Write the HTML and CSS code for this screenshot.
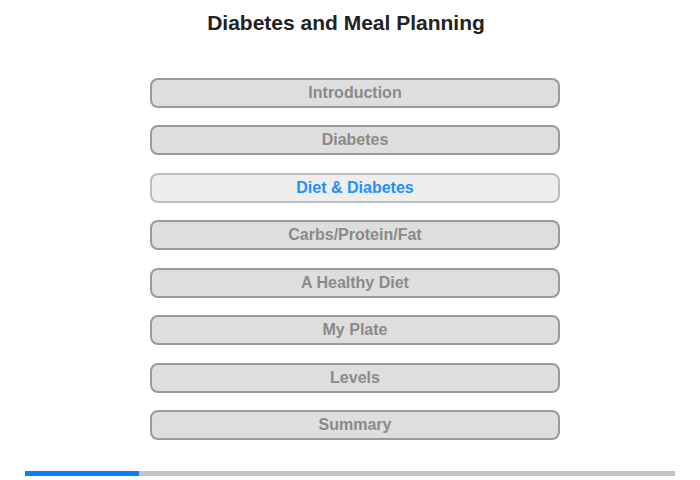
FILE: index.html
```html
<!DOCTYPE html>
<html>
<head>
<meta charset="utf-8">
<link rel="stylesheet" href="styles.css">
</head>
<body>
<div class="page">
  <h1 class="title">Diabetes and Meal Planning</h1>
  <nav class="menu">
    <div class="item">Introduction</div>
    <div class="item">Diabetes</div>
    <div class="item active">Diet &amp; Diabetes</div>
    <div class="item">Carbs/Protein/Fat</div>
    <div class="item">A Healthy Diet</div>
    <div class="item">My Plate</div>
    <div class="item">Levels</div>
    <div class="item">Summary</div>
  </nav>
  <div class="progress"><div class="progress-fill" style="width:114px"></div></div>
</div>
</body>
</html>
```
FILE: styles.css
```css
html, body {
  margin: 0;
  padding: 0;
  background: #fff;
}
.page {
  width: 700px;
  height: 480px;
  font-family: "Liberation Sans", Arial, sans-serif;
  display: flex;
  flex-direction: column;
  align-items: center;
}
.title {
  margin: 11px 8px 0 0;
  font-size: 21px;
  line-height: 24px;
  font-weight: bold;
  color: #222;
  text-align: center;
}
.menu {
  margin-top: 43px;
  margin-left: 10px;
  display: flex;
  flex-direction: column;
  gap: 17.43px;
}
.item {
  box-sizing: border-box;
  width: 410px;
  height: 30px;
  border: 2px solid #9a9a9a;
  border-radius: 8px;
  background: #dedede;
  color: #8a8a8a;
  font-size: 16px;
  font-weight: bold;
  line-height: 26px;
  text-align: center;
}
.item.active {
  background: #eeeeee;
  border-color: #bdbdbd;
  color: #1e90ff;
}
.progress {
  margin-top: 31px;
  width: 650px;
  height: 5px;
  background: #c4c4c4;
}
.progress-fill {
  height: 100%;
  background: #0a7cf2;
}
```
